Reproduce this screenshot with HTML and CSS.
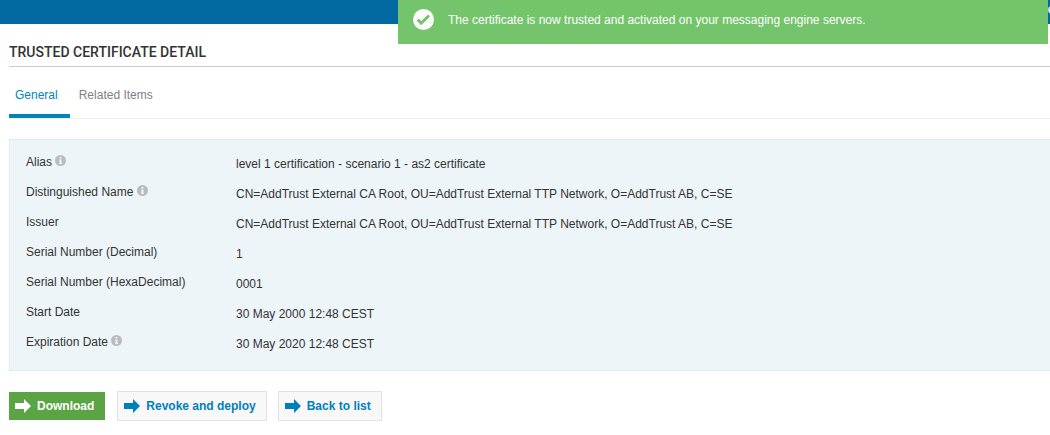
FILE: index.html
```html
<!DOCTYPE html>
<html lang="en">
<head>
<meta charset="utf-8">
<title>Trusted certificate detail</title>
<link rel="stylesheet" href="styles.css">
</head>
<body>
<svg class="defs" aria-hidden="true">
  <symbol id="info" viewBox="0 0 11 11">
    <circle cx="5.5" cy="5.5" r="5.5" fill="#b9bbbc"/>
    <path d="M4.500 2h2v1.500h-2zM4 4.500h2.500V8H7v1H4V8h.500V5.500H4z" fill="#eef5f9"/>
  </symbol>
  <symbol id="arrow" viewBox="0 0 16 14">
    <path d="M0 4h9V0l7 7-7 7v-4H0z" fill="currentColor"/>
  </symbol>
</svg>
<header class="topbar">
  <svg class="topbar-icon" viewBox="0 0 8 8" aria-hidden="true"><circle cx="4" cy="4" r="4" fill="#d5e6f1"/></svg>
</header>
<div class="toast" role="status">
  <svg class="toast-icon" viewBox="0 0 21 21" aria-hidden="true">
    <circle cx="10.500" cy="10.500" r="10.500" fill="#fff"/>
    <path d="M4.700 10.700l3.600 3.500 7.700-7.700" fill="none" stroke="#73c46b" stroke-width="3"/>
  </svg>
  <span>The certificate is now trusted and activated on your messaging engine servers.</span>
</div>
<main class="page">
  <h1 class="title">TRUSTED CERTIFICATE DETAIL</h1>
  <nav class="tabs">
    <a class="tab tab-active" href="#general" aria-current="page">General</a>
    <a class="tab" href="#related">Related Items</a>
  </nav>
  <dl class="panel" id="general">
    <div class="row"><dt>Alias <svg class="info"><use href="#info"/></svg></dt><dd>level 1 certification - scenario 1 - as2 certificate</dd></div>
    <div class="row"><dt>Distinguished Name <svg class="info"><use href="#info"/></svg></dt><dd>CN=AddTrust External CA Root, OU=AddTrust External TTP Network, O=AddTrust AB, C=SE</dd></div>
    <div class="row"><dt>Issuer</dt><dd>CN=AddTrust External CA Root, OU=AddTrust External TTP Network, O=AddTrust AB, C=SE</dd></div>
    <div class="row"><dt>Serial Number (Decimal)</dt><dd>1</dd></div>
    <div class="row"><dt>Serial Number (HexaDecimal)</dt><dd>0001</dd></div>
    <div class="row"><dt>Start Date</dt><dd>30 May 2000 12:48 CEST</dd></div>
    <div class="row"><dt>Expiration Date <svg class="info"><use href="#info"/></svg></dt><dd>30 May 2020 12:48 CEST</dd></div>
  </dl>
  <div class="actions">
    <button class="btn btn-primary" type="button"><svg class="arrow"><use href="#arrow"/></svg>Download</button>
    <button class="btn" type="button"><svg class="arrow"><use href="#arrow"/></svg>Revoke and deploy</button>
    <button class="btn" type="button"><svg class="arrow"><use href="#arrow"/></svg>Back to list</button>
  </div>
</main>
</body>
</html>
```
FILE: styles.css
```css
* { box-sizing: border-box; }
body {
  margin: 0;
  background: #fff;
  color: #333;
  font: 12px/16px "Liberation Sans", Arial, sans-serif;
  overflow-x: hidden;
}
.defs { position: absolute; width: 0; height: 0; }
.topbar {
  display: flex;
  align-items: flex-start;
  justify-content: flex-end;
  height: 24px;
  padding-top: 6px;
  background: #00699f;
}
.topbar-icon { width: 8px; height: 8px; margin-right: -6px; }
.toast {
  position: absolute;
  top: 0;
  right: 2px;
  display: flex;
  align-items: center;
  gap: 14px;
  width: 650px;
  max-width: 100%;
  padding: 9px 15px 14px;
  background: #73c46b;
  color: #fff;
}
.toast-icon { width: 21px; height: 21px; flex: none; }
.page { padding-left: 9px; }
.title {
  margin: 0;
  padding: 18px 0 4px;
  border-bottom: 1px solid #c5d0d0;
  font: 500 14px/20px Roboto, "Liberation Sans", sans-serif;
}
.tabs {
  display: flex;
  gap: 3px;
  border-bottom: 1px solid #f0f0f0;
}
.tab {
  padding: 20px 12px 11px 6px;
  border-bottom: 4px solid transparent;
  color: #808080;
  text-decoration: none;
}
.tab-active { border-color: #0084be; color: #0084be; }
.panel {
  margin: 20px 0 0;
  padding: 9px 16px 11px;
  border: 1px solid #deebf2;
  border-right: 0;
  background: #edf5f9;
}
.row {
  display: grid;
  grid-template-columns: 210px 1fr;
  height: 30px;
}
.row dt { padding-top: 5px; }
.row dd { margin: 0; padding-top: 7px; }
.info { width: 11px; height: 11px; vertical-align: 0; }
.actions {
  display: flex;
  align-items: center;
  gap: 11px;
  margin-top: 20px;
}
.btn {
  display: flex;
  align-items: center;
  gap: 6px;
  height: 30px;
  padding: 0 10px 0 6px;
  border: 1px solid #e2e2e2;
  background: #f8f8f8;
  color: #0080bb;
  font: bold 12px/16px "Liberation Sans", Arial, sans-serif;
}
.btn-primary {
  height: 28px;
  margin-right: 1px;
  padding-right: 11px;
  border: 0;
  background: #5ba444;
  color: #fff;
}
.arrow { width: 16px; height: 14px; }
```
